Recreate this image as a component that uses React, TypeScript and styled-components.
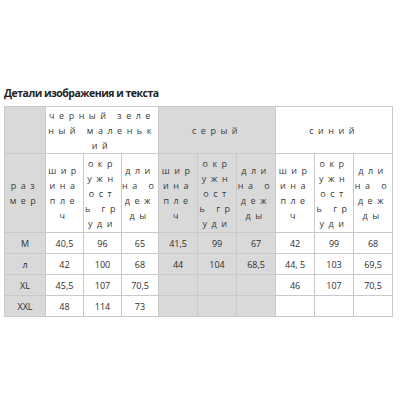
import React from "react";
import styled, { createGlobalStyle } from "styled-components";

const Global = createGlobalStyle`
  html, body { margin: 0; padding: 0; background: #fff; }
  body { font-family: "Open Sans", "DejaVu Sans", sans-serif; }
`;

const Page = styled.div`
  padding: 85px 0 0 4px;
`;

const Title = styled.h2`
  margin: 0 0 5px 0;
  font-size: 10.5px;
  line-height: 16px;
  font-weight: 700;
  letter-spacing: -0.5px;
  color: #222;
`;

const Table = styled.table`
  border-collapse: collapse;
  table-layout: fixed;
  width: 389px;
  color: #333;
`;

const Col = styled.col<{ $w: number }>`
  width: ${(p) => p.$w}px;
`;

const Row = styled.tr<{ $h: number }>`
  height: ${(p) => p.$h}px;
`;

const Cell = styled.td<{ $grey?: boolean }>`
  border: 1px solid #c9c9c9;
  background: ${(p) => (p.$grey ? "#d9d9d9" : "#ffffff")};
  padding: 0;
  text-align: center;
  vertical-align: middle;
  font-size: 9px;
  line-height: 15px;
  color: #2e2e2e;
`;

const Line = styled.span`
  display: block;
  letter-spacing: 4.5px;
  white-space: pre;
  color: #3a3a3a;
`;

const Spaced = ({ lines }: { lines: string[] }) => (
  <>
    {lines.map((l, i) => (
      <Line key={i}>{l}</Line>
    ))}
  </>
);

const widths = [41, 38, 38, 37, 39, 39, 39, 39, 39, 39];

const groups = [
  { lines: ["черный зеле", "ный маленьк", "ий"], grey: false },
  { lines: ["серый"], grey: true },
  { lines: ["синий"], grey: false },
];

const subHeads = [
  ["шир", "ина", "пле", "ч"],
  ["окр", "ужн", "ост", "ь гр", "уди"],
  ["дли", "на о", "деж", "ды"],
];

const rows: { size: string; vals: string[] }[] = [
  { size: "M", vals: ["40,5", "96", "65", "41,5", "99", "67", "42", "99", "68"] },
  { size: "л", vals: ["42", "100", "68", "44", "104", "68,5", "44, 5", "103", "69,5"] },
  { size: "XL", vals: ["45,5", "107", "70,5", "", "", "", "46", "107", "70,5"] },
  { size: "XXL", vals: ["48", "114", "73", "", "", "", "", "", ""] },
];

export default function App() {
  return (
    <Page>
      <Global />
      <Title>Детали изображения и текста</Title>
      <Table>
        <colgroup>
          {widths.map((w, i) => (
            <Col key={i} $w={w} />
          ))}
        </colgroup>
        <tbody>
          <Row $h={47}>
            <Cell $grey />
            {groups.map((g, i) => (
              <Cell key={i} colSpan={3} $grey={g.grey}>
                <Spaced lines={g.lines} />
              </Cell>
            ))}
          </Row>
          <Row $h={79}>
            <Cell $grey>
              <Spaced lines={["раз", "мер"]} />
            </Cell>
            {groups.map((g, gi) =>
              subHeads.map((s, si) => (
                <Cell key={`${gi}-${si}`} $grey={g.grey}>
                  <Spaced lines={s} />
                </Cell>
              ))
            )}
          </Row>
          {rows.map((r) => (
            <Row $h={21} key={r.size}>
              <Cell $grey>{r.size}</Cell>
              {r.vals.map((v, i) => (
                <Cell key={i} $grey={groups[Math.floor(i / 3)].grey}>
                  {v}
                </Cell>
              ))}
            </Row>
          ))}
        </tbody>
      </Table>
    </Page>
  );
}
